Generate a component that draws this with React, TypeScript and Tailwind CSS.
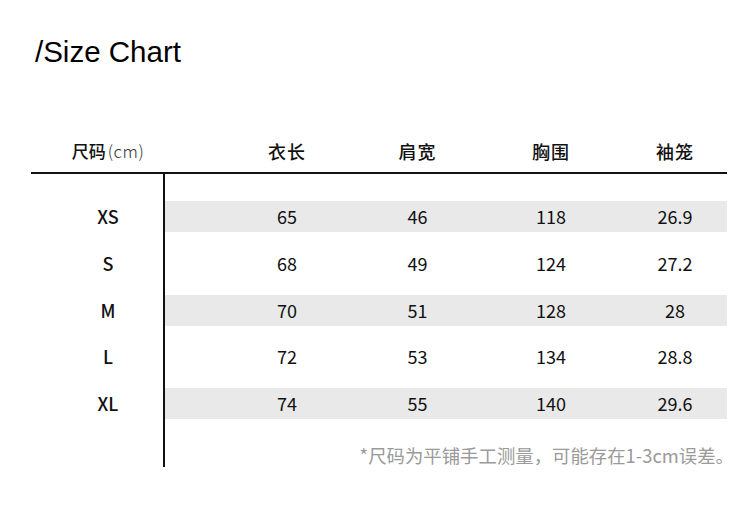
import React from "react";

const rows = [
  { size: "XS", v: ["65", "46", "118", "26.9"], shade: true },
  { size: "S", v: ["68", "49", "124", "27.2"], shade: false },
  { size: "M", v: ["70", "51", "128", "28"], shade: true },
  { size: "L", v: ["72", "53", "134", "28.8"], shade: false },
  { size: "XL", v: ["74", "55", "140", "29.6"], shade: true },
];

const cjk = "font-['Noto_Sans_CJK_SC','Noto_Sans',sans-serif]";

function Cells({ items, cls }: { items: React.ReactNode[]; cls: string }) {
  return (
    <div className={`flex items-center pl-[72px] ${cls}`}>
      <div className="w-[100px] text-center">{items[0]}</div>
      <div className="ml-[30.5px] w-[100px] text-center">{items[1]}</div>
      <div className="ml-[33.5px] w-[100px] text-center">{items[2]}</div>
      <div className="ml-[24px] w-[100px] text-center">{items[3]}</div>
    </div>
  );
}

export default function App() {
  return (
    <div className={`w-[750px] h-[521px] bg-white text-[#111] ${cjk}`}>
      <div className="pt-[38px] pl-[35px] font-['Liberation_Sans',Arial,sans-serif] text-[29.5px] leading-[28px] text-black">
        /Size Chart
      </div>
      <div className="mt-[64px] ml-[31px] w-[696px]">
        <div className="grid grid-cols-[134px_1fr] h-[44px] items-center border-b-2 border-[#111]">
          <div className="pl-[20px] text-center whitespace-nowrap">
            <span className="text-[17px] font-medium">尺码</span>
            <span className="text-[17px] font-light text-[#333] ml-[2px] tracking-[0.5px]">(cm)</span>
          </div>
          <Cells
            cls="text-[18px] font-medium tracking-[1px]"
            items={["衣长", "肩宽", "胸围", "袖笼"]}
          />
        </div>
        <div className="flex">
          <div className="w-[134px] border-r-2 border-[#111] pt-[27px] pl-[22px] flex flex-col gap-[15.75px] h-[293px]">
            {rows.map((r) => (
              <div key={r.size} className="h-[31px] flex items-center justify-center text-[18px] font-medium">
                {r.size}
              </div>
            ))}
          </div>
          <div className="flex-1 pt-[27px] flex flex-col">
            <div className="flex flex-col gap-[15.75px]">
              {rows.map((r) => (
                <div key={r.size} className={`h-[31px] ${r.shade ? "bg-[#e9e9e9]" : ""}`}>
                  <Cells cls="h-full text-[18px]" items={r.v} />
                </div>
              ))}
            </div>
            <div className="mt-[24px] h-[24px] leading-[24px] text-right text-[18.4px] text-[#9a9a9a] whitespace-nowrap -mr-[7px]">
              *尺码为平铺手工测量，可能存在1-3cm误差。
            </div>
          </div>
        </div>
      </div>
    </div>
  );
}
